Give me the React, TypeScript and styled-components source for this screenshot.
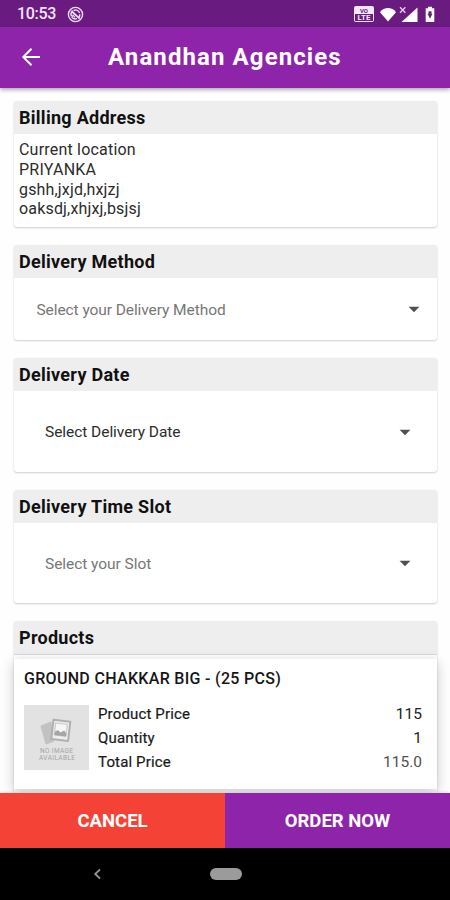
import React from 'react';
import styled, { createGlobalStyle } from 'styled-components';

const GlobalStyle = createGlobalStyle`
  * { box-sizing: border-box; }
  body { margin: 0; background: #fff; font-family: Roboto, "Liberation Sans", sans-serif; }
`;

const Screen = styled.div`
  width: 450px;
  height: 900px;
  display: flex;
  flex-direction: column;
  overflow: hidden;
  background: #fefefe;
`;

const StatusBar = styled.div`
  height: 27px;
  flex: none;
  display: flex;
  align-items: center;
  padding: 1px 14px 0 17px;
  background: #6a1b80;
  color: #f3e6f6;
`;

const Clock = styled.span`
  width: 50px;
  font-size: 16px;
  font-weight: 500;
  line-height: 20px;
  letter-spacing: -0.3px;
`;

const StatusIcons = styled.div`
  display: flex;
  align-items: center;
  gap: 4px;
  margin-left: auto;
`;

const AppBar = styled.header`
  height: 61px;
  flex: none;
  display: flex;
  align-items: center;
  padding: 0 0 2px 20px;
  background: #8e24aa;
  box-shadow: 0 2px 4px rgba(0, 0, 0, 0.32);
  z-index: 1;
`;

const Title = styled.h1`
  margin: 0 0 0 66px;
  color: #fff;
  font-size: 24px;
  font-weight: 700;
  line-height: 30px;
  letter-spacing: 1.1px;
  white-space: nowrap;
`;

const BackButton = styled.button`
  width: 22px;
  height: 22px;
  padding: 0;
  border: 0;
  background: none;
  display: flex;
`;

const Content = styled.main`
  flex: 1;
  min-height: 0;
  display: flex;
  flex-direction: column;
  gap: 18px;
  padding: 13px 13px 0 14px;
  overflow: hidden;
`;

const Card = styled.section<{ $height: number }>`
  height: ${(p) => p.$height}px;
  flex: none;
  display: flex;
  flex-direction: column;
  border-radius: 3px;
  background: #fff;
  box-shadow: 0 1px 2px rgba(0, 0, 0, 0.18), 0 0 1px rgba(0, 0, 0, 0.1);
`;

const CardHeader = styled.h2<{ $ruled?: boolean }>`
  height: ${(p) => (p.$ruled ? 34 : 33)}px;
  flex: none;
  margin: 0;
  padding: 0 0 0 5px;
  background: #eee;
  border-bottom: ${(p) => (p.$ruled ? '1px solid #dadada' : '0')};
  border-radius: 3px 3px 0 0;
  color: #111;
  font-size: 18px;
  font-weight: 700;
  line-height: 33px;
  letter-spacing: 0.28px;
`;

const Address = styled.div`
  padding: 6px 5px 0;
  color: #2c2c2c;
  font-size: 16px;
  line-height: 19.8px;
`;

const AddressLine = styled.div<{ $spacing: number }>`
  letter-spacing: ${(p) => p.$spacing}px;
`;

const Select = styled.div<{ $inset: number; $color: string; $spacing: number }>`
  flex: 1;
  display: flex;
  align-items: center;
  justify-content: space-between;
  padding: 1px ${(p) => p.$inset - 5}px 0 ${(p) => p.$inset}px;
  color: ${(p) => p.$color};
  font-size: 15.5px;
  letter-spacing: ${(p) => p.$spacing}px;
`;

const Product = styled.article`
  height: 130px;
  flex: none;
  margin-top: 4px;
  padding: 10px 15px 0 10px;
  background: #fff;
  box-shadow: 0 3px 12px rgba(0, 0, 0, 0.22);
`;

const ProductName = styled.h3`
  margin: 0;
  color: #161616;
  font-size: 16px;
  font-weight: 500;
  line-height: 19px;
  letter-spacing: 0.31px;
  white-space: nowrap;
`;

const ProductBody = styled.div`
  display: flex;
  gap: 9px;
  margin-top: 17px;
`;

const Facts = styled.dl`
  flex: 1;
  margin: -1px 0 0;
`;

const Fact = styled.div`
  display: flex;
  justify-content: space-between;
  height: 24px;
  line-height: 21px;
  font-size: 15px;
  letter-spacing: 0.15px;
`;

const FactName = styled.dt`
  color: #1a1a1a;
  -webkit-text-stroke: 0.2px #1a1a1a;
`;

const FactValue = styled.dd<{ $soft?: boolean }>`
  margin: 0;
  font-size: 15.5px;
  letter-spacing: 0;
  color: ${(p) => (p.$soft ? '#505050' : '#222')};
`;

const Actions = styled.footer`
  height: 55px;
  flex: none;
  display: flex;
  z-index: 1;
  box-shadow: 0 -1px 3px rgba(0, 0, 0, 0.12);
`;

const ActionButton = styled.button<{ $color: string }>`
  flex: 1;
  padding: 0;
  border: 0;
  background: ${(p) => p.$color};
  color: #fff;
  font-family: inherit;
  font-size: 18.5px;
  font-weight: 700;
`;

const NavBar = styled.nav`
  height: 52px;
  flex: none;
  display: flex;
  align-items: center;
  padding-left: 92px;
  background: #000;
`;

const HomePill = styled.div`
  width: 32px;
  height: 12px;
  margin-left: 107px;
  border-radius: 6px;
  background: #9b9b9b;
`;

const Caret = () => (
  <svg width="12" height="7" viewBox="0 0 12 7">
    <path d="M.6.8h10.8L6 6.2z" fill="#505050" />
  </svg>
);

const SyncIcon = () => (
  <svg width="17" height="17" viewBox="0 0 17 17" fill="none" stroke="#eadcf0">
    <circle cx="8.5" cy="8.5" r="7.1" strokeWidth="1.4" />
    <path d="M4.4 10.2A4.4 4.4 0 0 1 6 4.9M6.6 4.5A4.4 4.4 0 0 1 12.6 7M12.8 8.2A4.4 4.4 0 0 1 11.4 11.8M10 12.6A4.4 4.4 0 0 1 5.2 11.6" strokeWidth="1.5" />
    <path d="M4.3 5l8.4 7.6" strokeWidth="1.9" />
    <path d="M4.6 11.8l1.5-2.6 2 2.2" strokeWidth="1.2" />
  </svg>
);

const LteLabel = styled.div`
  width: 20px;
  height: 16px;
  display: flex;
  flex-direction: column;
  overflow: hidden;
  border: 1px solid #f3e6f6;
  border-radius: 1.5px;
  background: #f3e6f6;
  color: #6a1b80;
  font-size: 6px;
  font-weight: 700;
  line-height: 7px;
  text-align: center;
`;

const LteLower = styled.span`
  height: 8px;
  background: #6a1b80;
  color: #f3e6f6;
  font-size: 8px;
  line-height: 8px;
`;

const SignalIcons = () => (
  <svg width="58" height="18" viewBox="0 0 58 18" fill="#fff">
    <path d="M2 7.2C5.8 1.7 14.2 1.7 18 7.2L10 16.5z" />
    <path d="M23.5 17H39.5V2.5z" />
    <path d="M22 2.3l5.4 5.4M27.4 2.3L22 7.7" stroke="#e6d2eb" strokeWidth="1.3" />
    <path d="M50 1.8h4v1.5h2.3V17h-8.6V3.3H50z" />
    <path d="M50.5 6.2h3v2.6h1L52 13.8l-2.5-5h1z" fill="#5d2871" />
  </svg>
);

const Placeholder = () => (
  <svg width="65" height="65" viewBox="0 0 65 65">
    <path d="M0 0h65v65H0z" fill="#e2e2e2" />
    <path d="M17 21l10-4 1 18 2 1-8 3z" fill="#c2c2c2" stroke="#c2c2c2" strokeLinejoin="round" />
    <path d="M29.5 14.7l16.8 2-2.2 19.3-16.8-2z" fill="#ededed" stroke="#b0b0b0" strokeWidth="2" strokeLinejoin="round" />
    <path d="M31.7 18l11.6 1.4-1.4 12-11.6-1.4z" fill="#f6f6f6" stroke="#bdbdbd" strokeWidth=".8" />
    <path d="M30.7 27l3-2 2.8 2.6 3.8-2.2 2.1 3.4-.4 2.6-11.7-1.4z" fill="#a6a6a6" />
    <g fill="#a2a2a2" fontFamily="Roboto, sans-serif" fontSize="6.5" textAnchor="middle">
      <text x="32.5" y="47.7" textLength="33">NO IMAGE</text>
      <text x="33" y="55" textLength="36">AVAILABLE</text>
    </g>
  </svg>
);

const facts = [
  { name: 'Product Price', value: '115' },
  { name: 'Quantity', value: '1' },
  { name: 'Total Price', value: '115.0', soft: true },
];

export default function App() {
  return (
    <Screen>
      <GlobalStyle />
      <StatusBar>
        <Clock>10:53</Clock>
        <SyncIcon />
        <StatusIcons>
          <LteLabel>VO<LteLower>LTE</LteLower></LteLabel>
          <SignalIcons />
        </StatusIcons>
      </StatusBar>
      <AppBar>
        <BackButton aria-label="Back">
          <svg width="22" height="22" viewBox="0 0 22 22" fill="none" stroke="#fff" strokeWidth="2">
            <path d="M20 11H3.5M11.5 2.8L3.3 11l8.2 8.2" />
          </svg>
        </BackButton>
        <Title>Anandhan Agencies</Title>
      </AppBar>
      <Content>
        <Card $height={126}>
          <CardHeader>Billing Address</CardHeader>
          <Address>
            <AddressLine $spacing={0.2}>Current location</AddressLine>
            <AddressLine $spacing={0.25}>PRIYANKA</AddressLine>
            <AddressLine $spacing={0.17}>gshh,jxjd,hxjzj</AddressLine>
            <AddressLine $spacing={0.17}>oaksdj,xhjxj,bsjsj</AddressLine>
          </Address>
        </Card>
        <Card $height={95}>
          <CardHeader>Delivery Method</CardHeader>
          <Select $inset={22.5} $color="#777" $spacing={-0.08}>Select your Delivery Method<Caret /></Select>
        </Card>
        <Card $height={114}>
          <CardHeader>Delivery Date</CardHeader>
          <Select $inset={31} $color="#2c2c2c" $spacing={-0.05}>Select Delivery Date<Caret /></Select>
        </Card>
        <Card $height={113}>
          <CardHeader>Delivery Time Slot</CardHeader>
          <Select $inset={31} $color="#777" $spacing={-0.05}>Select your Slot<Caret /></Select>
        </Card>
        <Card $height={190}>
          <CardHeader $ruled>Products</CardHeader>
          <Product>
            <ProductName>GROUND CHAKKAR BIG - (25 PCS)</ProductName>
            <ProductBody>
              <Placeholder />
              <Facts>
                {facts.map((f) => (
                  <Fact key={f.name}>
                    <FactName>{f.name}</FactName>
                    <FactValue $soft={f.soft}>{f.value}</FactValue>
                  </Fact>
                ))}
              </Facts>
            </ProductBody>
          </Product>
        </Card>
      </Content>
      <Actions>
        <ActionButton $color="#f44336">CANCEL</ActionButton>
        <ActionButton $color="#8e24aa">ORDER NOW</ActionButton>
      </Actions>
      <NavBar>
        <svg width="11" height="14" viewBox="0 0 11 14" fill="none" stroke="#929292" strokeWidth="1.8">
          <path d="M8 2.5L3.2 7 8 11.5" />
        </svg>
        <HomePill />
      </NavBar>
    </Screen>
  );
}
